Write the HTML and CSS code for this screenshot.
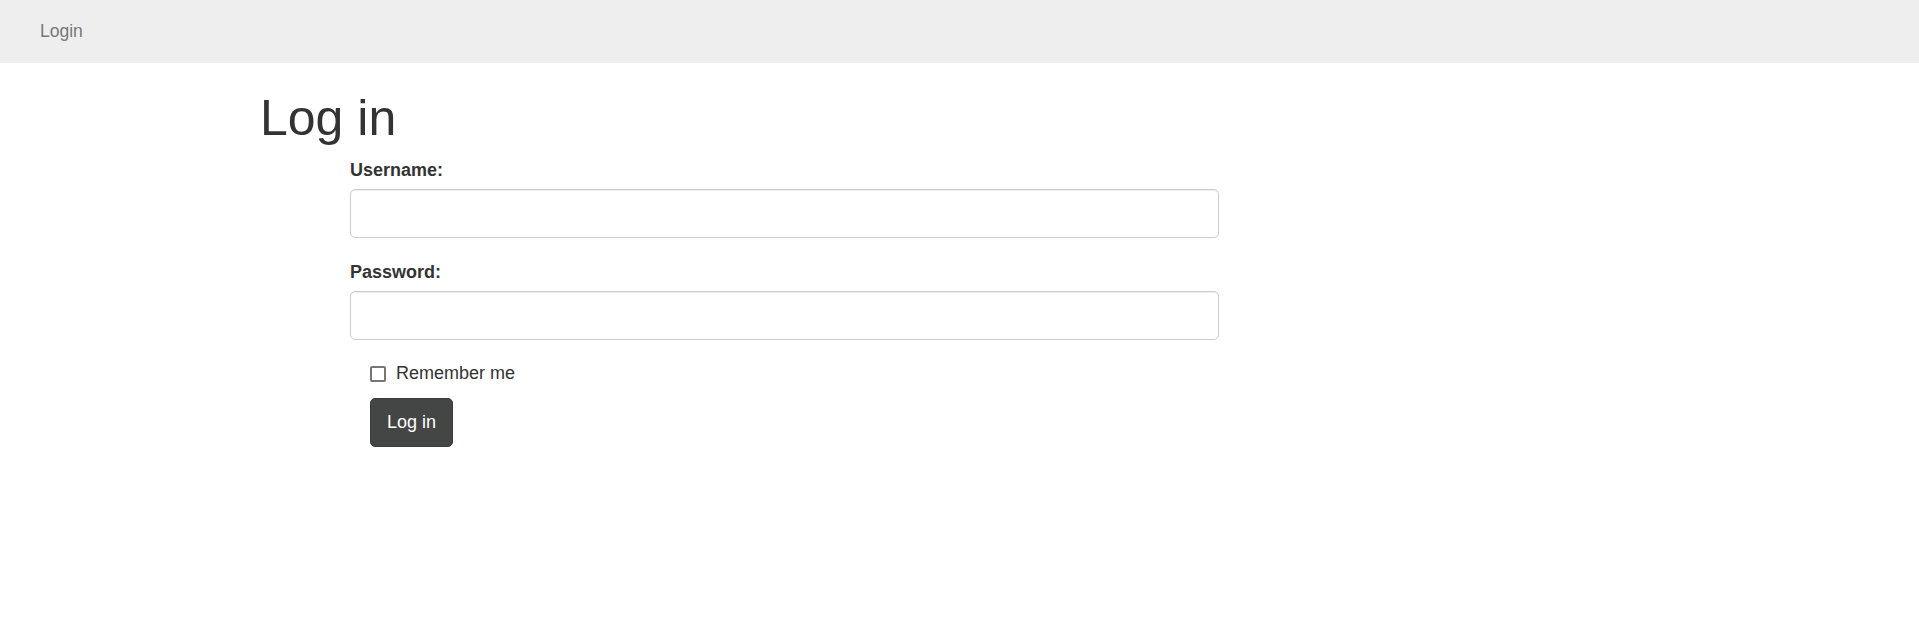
FILE: index.html
```html
<!DOCTYPE html>
<html lang="en">
<head>
<meta charset="utf-8">
<title>Log in</title>
<link rel="stylesheet" href="styles.css">
</head>
<body>
<nav class="navbar">
  <a class="nav-link" href="#">Login</a>
</nav>
<main class="content">
  <h1 class="title">Log in</h1>
  <form class="login-form">
    <div class="field">
      <label class="field-label" for="username">Username:</label>
      <input class="field-input" type="text" id="username">
    </div>
    <div class="field">
      <label class="field-label" for="password">Password:</label>
      <input class="field-input" type="password" id="password">
    </div>
    <label class="remember">
      <input class="remember-box" type="checkbox">
      <span>Remember me</span>
    </label>
    <button class="submit" type="submit">Log in</button>
  </form>
</main>
</body>
</html>
```

FILE: styles.css
```css
* { box-sizing: border-box; }
html, body { margin: 0; padding: 0; }
body {
  font-family: "Liberation Sans", Arial, sans-serif;
  font-size: 18px;
  line-height: 25px;
  color: #333;
  background: #fff;
}
.navbar {
  height: 62.5px;
  background: #eeeeee;
  padding: 18.75px 0 0 40px;
}
.nav-link {
  display: block;
  color: #777;
  text-decoration: none;
  font-size: 17.5px;
  line-height: 25px;
}
.content {
  padding-left: 260px;
}
.title {
  margin: 29.5px 0 0;
  font-size: 50px;
  line-height: 53px;
  font-weight: 400;
  color: #333;
}
.login-form {
  width: 869px;
  margin-left: 90px;
  margin-top: 12.5px;
  display: flex;
  flex-direction: column;
  align-items: flex-start;
}
.field {
  width: 100%;
  display: flex;
  flex-direction: column;
  margin-bottom: 22.5px;
}
.field-label {
  font-weight: 700;
  line-height: 25px;
  margin-bottom: 6px;
}
.field-input {
  width: 100%;
  height: 49px;
  border: 1.25px solid #ccc;
  border-radius: 5px;
  padding: 8px 15px;
  font: inherit;
  color: #555;
  background: #fff;
  box-shadow: inset 0 1px 1px rgba(0,0,0,0.075);
}
.remember {
  display: flex;
  align-items: center;
  margin-left: 20px;
  margin-top: -2px;
  line-height: 25px;
}
.remember-box {
  -webkit-appearance: none;
  appearance: none;
  width: 16px;
  height: 16px;
  margin: 1px 10px 0 0;
  border: 2px solid #767676;
  border-radius: 2px;
  background: #fff;
}
.submit {
  margin: 12.5px 0 0 20px;
  height: 49px;
  padding: 0 16px;
  background: #444646;
  color: #fff;
  border: 1.25px solid #3a3c3c;
  border-radius: 5px;
  font: inherit;
  line-height: 25px;
}
```
